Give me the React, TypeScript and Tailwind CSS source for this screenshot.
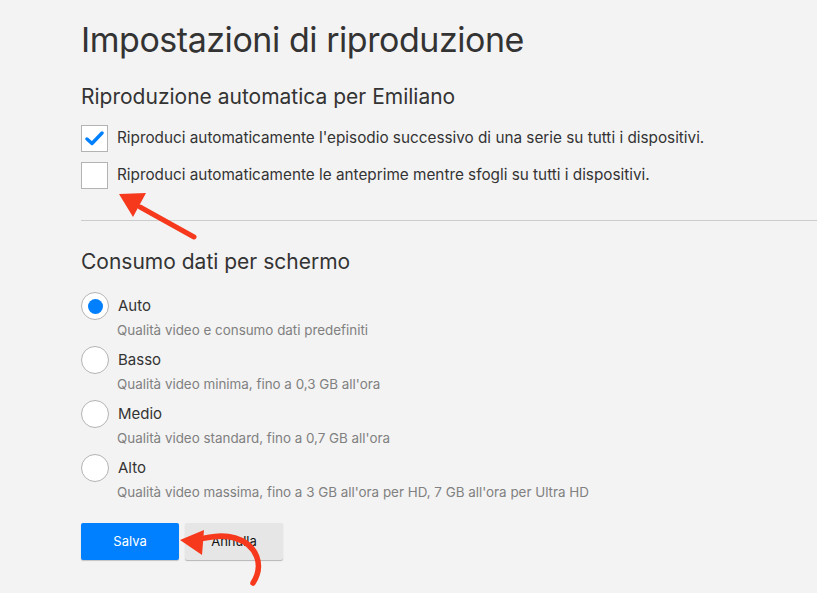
import { useState } from "react";

const qualityOptions = [
  { id: "auto", label: "Auto", hint: "Qualità video e consumo dati predefiniti" },
  { id: "low", label: "Basso", hint: "Qualità video minima, fino a 0,3 GB all'ora" },
  { id: "medium", label: "Medio", hint: "Qualità video standard, fino a 0,7 GB all'ora" },
  { id: "high", label: "Alto", hint: "Qualità video massima, fino a 3 GB all'ora per HD, 7 GB all'ora per Ultra HD" },
];

function CheckRow({ checked, label, onToggle }: { checked: boolean; label: string; onToggle: () => void }) {
  return (
    <label className="flex items-center gap-[9px] cursor-pointer" onClick={onToggle}>
      <span className="w-[27px] h-[27px] shrink-0 bg-white border border-[#b3b3b3] flex items-center justify-center">
        {checked && (
          <svg width="19" height="15" viewBox="0 0 19 15">
            <path d="M2 8 L7 12.5 L17 2" fill="none" stroke="#0080ff" strokeWidth="3.4" strokeLinecap="round" strokeLinejoin="round" />
          </svg>
        )}
      </span>
      <span className="text-[15.3px] text-[#333]">{label}</span>
    </label>
  );
}

function Arrows() {
  return (
    <svg className="absolute inset-0 pointer-events-none" width="817" height="593" viewBox="0 0 817 593">
      {/* first arrow towards the unchecked box */}
      <line x1="194" y1="237" x2="140" y2="207" stroke="#f6391c" strokeWidth="5" strokeLinecap="round" />
      <polygon points="119,194 146,193 133,217" fill="#f6391c" />
      {/* curved arrow towards the save button */}
      <path d="M253 583 C 264 566, 258 545, 235 538 C 222 534, 208 537, 196 540" fill="none" stroke="#f6391c" strokeWidth="5.5" strokeLinecap="round" />
      <polygon points="180,540 204,530 202,555" fill="#f6391c" />
    </svg>
  );
}

export default function App() {
  const [nextEpisode, setNextEpisode] = useState(true);
  const [previews, setPreviews] = useState(false);
  const [quality, setQuality] = useState("auto");

  return (
    <div className="relative w-[817px] h-[593px] overflow-hidden bg-[#f3f3f3] font-['Inter','Liberation_Sans',sans-serif]">
      <div className="pl-[81px] pt-[18px]">
        <h1 className="text-[34px] leading-[44px] text-[#333] font-normal tracking-[-0.45px]">Impostazioni di riproduzione</h1>

        <h2 className="mt-[22px] text-[21px] leading-[26px] text-[#333] font-normal">Riproduzione automatica per Emiliano</h2>

        <div className="mt-[15px] flex flex-col gap-[10px]">
          <CheckRow
            checked={nextEpisode}
            onToggle={() => setNextEpisode(!nextEpisode)}
            label="Riproduci automaticamente l'episodio successivo di una serie su tutti i dispositivi."
          />
          <CheckRow
            checked={previews}
            onToggle={() => setPreviews(!previews)}
            label="Riproduci automaticamente le anteprime mentre sfogli su tutti i dispositivi."
          />
        </div>

        <div className="mt-[31px] border-t border-[#cccccc]" />

        <h2 className="mt-[28px] text-[21px] leading-[26px] text-[#333] font-normal">Consumo dati per schermo</h2>

        <div className="mt-[17px] flex flex-col">
          {qualityOptions.map(opt => (
            <div key={opt.id} className="h-[54px] cursor-pointer" onClick={() => setQuality(opt.id)}>
              <div className="flex items-center gap-[9px]">
                <span className="w-[28px] h-[28px] shrink-0 rounded-full bg-white border border-[#b3b3b3] flex items-center justify-center">
                  {quality === opt.id && <span className="w-[15px] h-[15px] rounded-full bg-[#0080ff]" />}
                </span>
                <span className="text-[15px] text-[#333]">{opt.label}</span>
              </div>
              <p className="ml-[36px] mt-[2px] text-[13.4px] leading-[16px] text-[#808080]">{opt.hint}</p>
            </div>
          ))}
        </div>

        <div className="mt-[15px] flex gap-[6px]">
          <button className="w-[98px] h-[37px] rounded-[2px] bg-[#0080ff] text-white text-[13px] shadow-[0_1px_1px_rgba(0,0,0,0.2)]">
            Salva
          </button>
          <button className="w-[98px] h-[37px] rounded-[2px] bg-[#e6e6e6] text-[#111] text-[13px] shadow-[0_1px_1px_rgba(0,0,0,0.25)]">
            Annulla
          </button>
        </div>
      </div>
      <Arrows />
    </div>
  );
}
